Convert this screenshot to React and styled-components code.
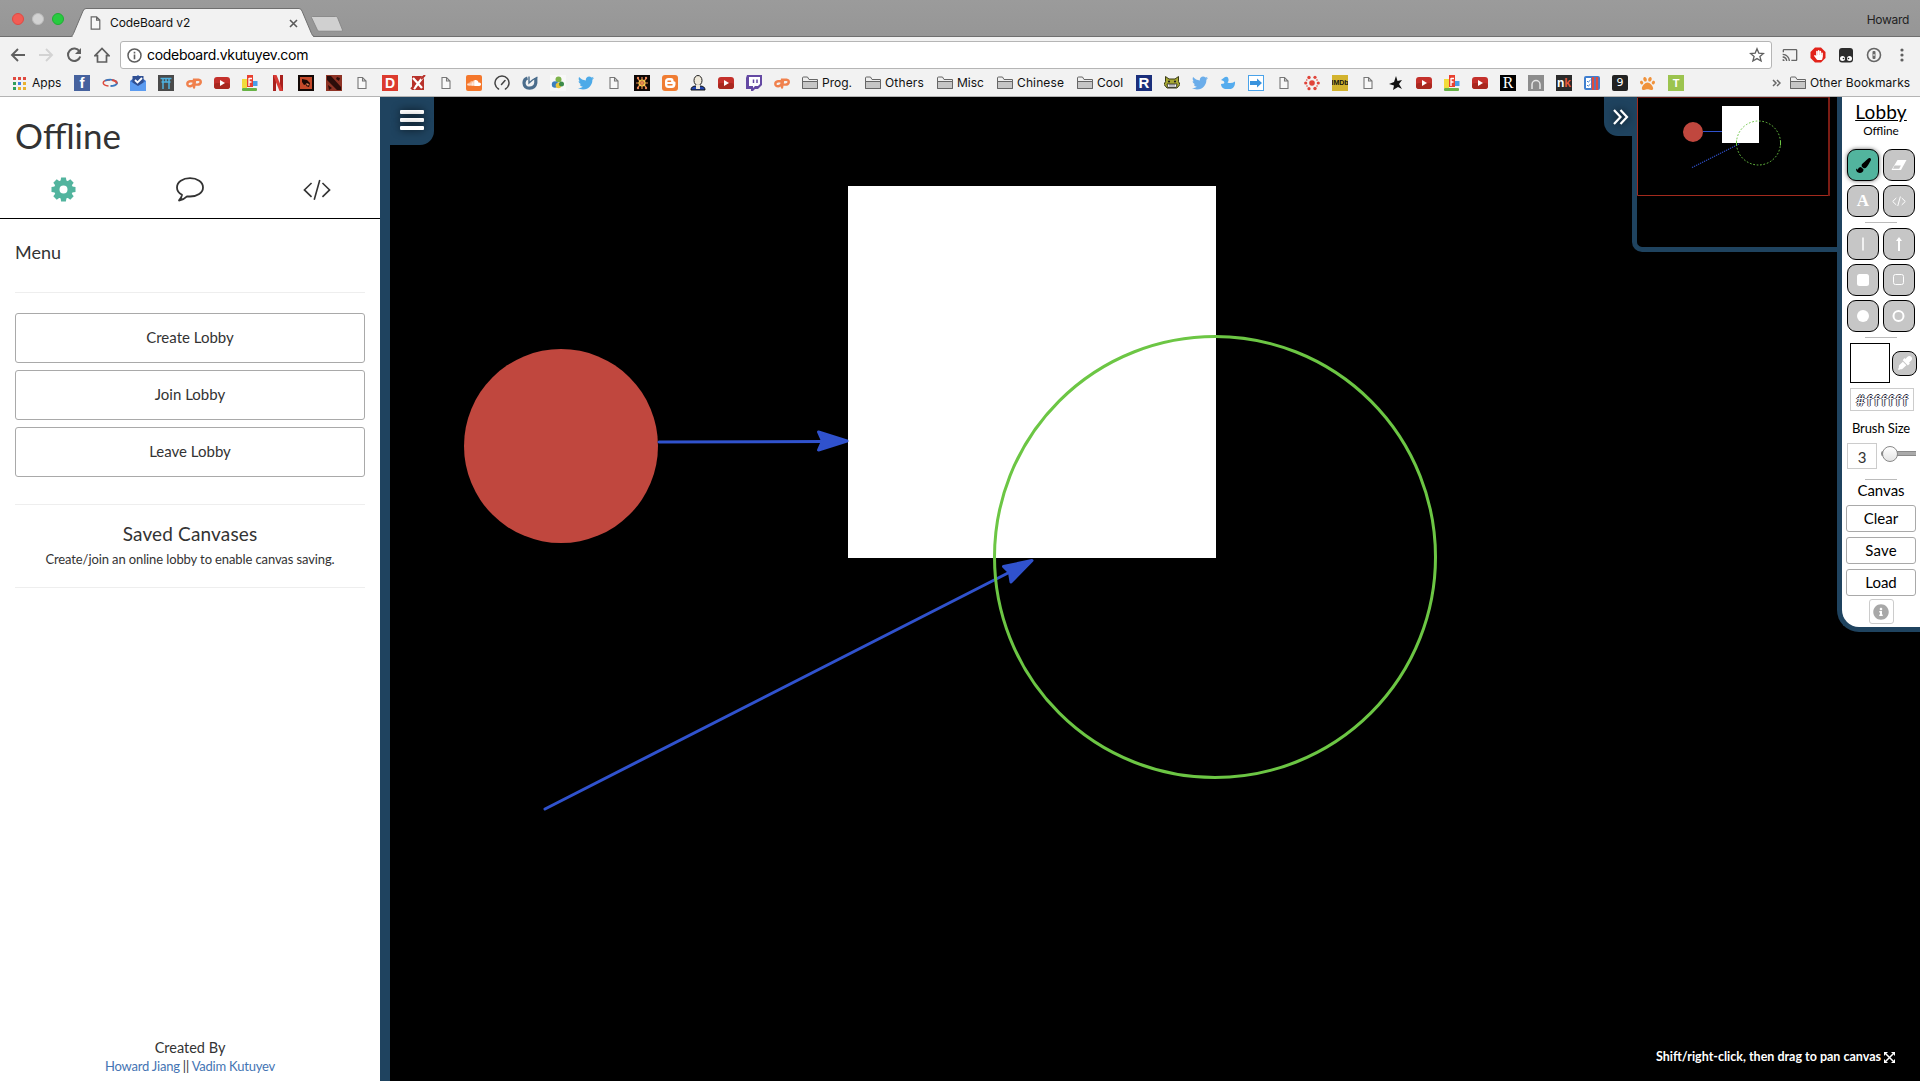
import React from "react";
import styled, { createGlobalStyle, css } from "styled-components";
import { FaTwitter, FaPaintBrush, FaEyeDropper, FaInfoCircle, FaSoundcloud, FaPaw, FaBlogger, FaHandPaper } from "react-icons/fa";
import { MdCast } from "react-icons/md";

const NAVY = "#1f435f";
const TEAL = "#52b49e";

const Global = createGlobalStyle`
  * { box-sizing: border-box; }
  body { margin: 0; background: #fff; color: #333; font-family: Lato, "Open Sans", sans-serif; overflow: hidden; }
  button { font-family: inherit; padding: 0; }
  svg { display: block; flex: none; }
`;

const Page = styled.div`
  width: 1920px;
  height: 1081px;
  display: grid;
  grid-template-rows: 97px 1fr;
`;

const Label = styled.span`
  display: inline-block;
  white-space: nowrap;
  font-size: ${(p) => p.$size}px;
  line-height: ${(p) => p.$line || 16}px;
  letter-spacing: ${(p) => (p.$track ? `${p.$track}px` : "normal")};
  font-weight: ${(p) => p.$weight || 400};
  color: ${(p) => p.$color || "inherit"};
`;

/* ---------- Browser window ---------- */

const Browser = styled.header`
  display: grid;
  grid-template-rows: 37px 36px 24px;
  background: #f2f2f2;
  border-bottom: 1px solid #b4b4b4;
  font-family: Inter, Roboto, sans-serif;
  color: #111;
`;

const TabStrip = styled.div`
  display: flex;
  background: linear-gradient(#9b9b9b, #969696);
  border-bottom: 1px solid #6f6f6f;
`;

const Lights = styled.div`
  display: flex;
  gap: 8px;
  padding: 13px 0 0 12px;
  width: 71px;
`;

const Light = styled.i`
  width: 12px;
  height: 12px;
  border-radius: 50%;
  background: ${(p) => p.$fill};
  border: 1px solid ${(p) => p.$edge};
`;

const Tab = styled.div`
  position: relative;
  width: 244px;
  height: 37px;
`;

const TabShape = styled.svg`
  position: absolute;
  left: 0;
  top: 0;
`;

const TabContent = styled.div`
  position: relative;
  display: flex;
  align-items: center;
  padding: 10px 17px 0 19px;
  height: 36px;
`;

const TabTitle = styled.div`
  flex: 1;
  display: flex;
  padding-left: 9px;
`;

const Profile = styled.div`
  margin-left: auto;
  padding: 8px 11px 0 0;
`;

const AddressRow = styled.div`
  display: flex;
  align-items: center;
  padding: 0 10px;
`;

const Nav = styled.div`
  display: flex;
  gap: 12px;
  width: 110px;
`;

const Omnibox = styled.div`
  width: 1652px;
  height: 28px;
  display: flex;
  align-items: center;
  background: #fff;
  border: 1px solid #b5b5b5;
  border-radius: 3px;
  padding: 0 6px;
`;

const Url = styled.div`
  flex: 1;
  display: flex;
  padding-left: 5px;
  color: #000;
`;

const Extensions = styled.div`
  display: flex;
  gap: 12px;
  padding-left: 10px;
`;

const BookmarkBar = styled.div`
  display: flex;
  align-items: center;
  gap: 12px;
  padding: 0 10px 4px 13px;
`;

const Bookmark = styled.div`
  display: flex;
  align-items: center;
  gap: 4px;
  flex: none;
  width: ${(p) => p.$w || 16}px;
`;

const Tile = styled.span`
  width: 16px;
  height: 16px;
  display: flex;
  align-items: center;
  justify-content: center;
  overflow: hidden;
  background: ${(p) => p.$bg};
  color: ${(p) => p.$fg || "#fff"};
  border-radius: ${(p) => p.$r || 0}px;
  font: ${(p) => p.$font || "700 13px 'Liberation Sans', sans-serif"};
  line-height: 16px;
`;

const Ember = styled.span`
  color: #e8593a;
`;

const Overflow = styled.div`
  margin-left: auto;
  display: flex;
  align-items: center;
  gap: 9px;
`;

const PageIcon = ({ w = 10, h = 13 }) => (
  <svg width={w} height={h} viewBox="0 0 10 13" fill="#f8f8f8" stroke="#666" strokeWidth="1.1">
    <path d="M1 .8h5l3 3v8.4H1zM6 .8v3h3" />
  </svg>
);

const PageMark = () => (
  <svg width="16" height="16" viewBox="0 0 16 16" fill="#f8f8f8" stroke="#777" strokeWidth="1.1">
    <path d="M4 2.5h4.500l3.500 3.500v7.500H4zM8.500 2.500V6H12" />
  </svg>
);

const Folder = () => (
  <svg width="16" height="14" viewBox="0 0 16 14" stroke="#666" strokeWidth="1">
    <path d="M.5 12.500V2Q.5 1 1.500 1h4L7 3.500h8.500v9z" fill="#eee" />
    <path d="M.5 12.500v-7h15v7z" fill="#c6c6c6" />
  </svg>
);

const Svg16 = ({ children }) => <svg width="16" height="16" viewBox="0 0 16 16">{children}</svg>;

const Youtube = () => (
  <Svg16>
    <rect x="0" y="2" width="16" height="12" rx="3" fill="#c4302b" />
    <rect x="0" y="8" width="16" height="6" rx="3" fill="#a9281f" />
    <path d="M6 5v6l5-3z" fill="#fff" />
  </Svg16>
);

const Codepath = () => (
  <Svg16>
    <g fill="none" stroke="#f0814d" strokeWidth="2.4" strokeLinecap="round">
      <path d="M6.500 6.200H4Q1.400 6.500 1.300 9q.2 2.400 3 2.300Q7 11 7.500 8.500L8 4.800h4.500q2.600.3 2.200 2.700Q14 9.600 11.500 9.600H9.500M9 5.500L8 12.500" />
    </g>
  </Svg16>
);

const Blocks = () => (
  <Svg16>
    <rect x="0" y="4" width="5" height="9" fill="#f2dc3b" />
    <rect x="5" y="0" width="6" height="12" fill="#e8402f" />
    <path d="M7 3v8M7 3.500h3M7 7h2.500" stroke="#fff" strokeWidth="1.300" fill="none" />
    <rect x="11" y="6" width="4.500" height="5" fill="#4a9ee8" />
    <rect x="0" y="13" width="15" height="3" rx="1" fill="#67b345" />
  </Svg16>
);

const Bird = ({ c }) => <FaTwitter size={16} color={c} />;

const leftMarks = [
  <Tile $bg="#46629e" $font="700 15px 'Liberation Sans', sans-serif">f</Tile>,
  <Svg16>
    <path d="M8 5Q1.500 4.700 1.200 8q.4 2.500 5.300 3" fill="none" stroke="#dd4b3e" strokeWidth="1.500" />
    <path d="M3 5.800Q7 4 11 5q4.500 1.200 4 3.500Q13.500 11 8.500 11" fill="none" stroke="#3c78bd" strokeWidth="1.800" />
    <path d="M10 5q5 1 4.600 3.700" fill="none" stroke="#dd4b3e" strokeWidth="2" />
  </Svg16>,
  <Svg16>
    <path d="M0 6l8-6 8 6v9H0z" fill="#3b6fc6" />
    <path d="M2.500 1h11v8l-5.500 3-5.500-3z" fill="#2f4f92" />
    <path d="M5 5l2.500 2.500L12 3" fill="none" stroke="#fff" strokeWidth="1.800" />
    <path d="M0 6l8 5 8-5v10H0z" fill="#5b9bf0" />
  </Svg16>,
  <Svg16>
    <rect width="16" height="16" fill="#4a4a4a" />
    <path d="M2.500 3.500h11M3.500 7h9M5 4v10M11 4v10M8 4v3" stroke="#4fb1e0" strokeWidth="1.500" fill="none" />
  </Svg16>,
  <Codepath />,
  <Youtube />,
  <Blocks />,
  <Svg16>
    <path d="M4.500 0v16M11.500 0v16" stroke="#a9201d" strokeWidth="3" />
    <path d="M3 0h3.500L13 16H9.500z" fill="#d83a34" />
  </Svg16>,
  <Svg16>
    <rect width="16" height="16" fill="#120806" />
    <rect x="2" y="2" width="12" height="12" fill="#c4492a" />
    <path d="M4 4l5 1 3 3-1 4-3-1 1-2-3 1-2-3z" fill="#1c0805" />
    <path d="M8 8l3 1-1 2z" fill="#e98f62" />
  </Svg16>,
  <Svg16>
    <rect width="16" height="16" fill="#8e3325" />
    <path d="M1 1h4l10 11v3h-4L1 5zM11 2l3 1-1 3-3-2zM2 10l4 3-3 2z" fill="#2b0d0a" />
  </Svg16>,
  <PageMark />,
  <Tile $bg="#dc3b2e" $font="700 14px 'Liberation Sans', sans-serif">D</Tile>,
  <Svg16>
    <rect x="2" y="1" width="12" height="14" fill="#b8322b" />
    <path d="M3 3l9 10M13 2L4 14" stroke="#fff" strokeWidth="2.300" />
    <path d="M11 4l4-4M1 14l3-3" stroke="#b8322b" strokeWidth="2" />
  </Svg16>,
  <PageMark />,
  <Tile $bg="#f4772c" $r={2}><FaSoundcloud size={14} /></Tile>,
  <Svg16>
    <path d="M4.500 14A7 7 0 1 1 11.500 14M7.500 9.500L11 5.500" fill="none" stroke="#444" strokeWidth="1.500" strokeLinecap="round" />
  </Svg16>,
  <Svg16>
    <path d="M5.500 3Q2 4 2 8q.3 5 5.500 5.200Q13 13 13.800 8V3" fill="none" stroke="#4b6d8c" strokeWidth="3.200" />
    <path d="M7 1.500v6.500l3.500-3 5-3" fill="none" stroke="#4b6d8c" strokeWidth="1.400" />
  </Svg16>,
  <Svg16>
    <rect width="16" height="16" fill="#f8f8f8" />
    <circle cx="8.500" cy="4.500" r="3" fill="#7db34a" />
    <circle cx="5" cy="9.500" r="3.200" fill="#3b7fc0" />
    <circle cx="8.500" cy="10.500" r="2.800" fill="#e8c53b" />
    <circle cx="11.500" cy="9" r="2.500" fill="#3d8b4a" />
  </Svg16>,
  <Bird c="#4daae8" />,
  <PageMark />,
  <Svg16>
    <rect width="16" height="16" fill="#0c0706" />
    <g fill="none" stroke="#e8894f" strokeWidth="1.200">
      <path d="M8 2v12M2 8h12M4 4l8 8M12 4l-8 8" />
      <circle cx="8" cy="8" r="3" stroke="#f7d04c" />
    </g>
    <g fill="#ee8a5c"><circle cx="4" cy="3" r="1.200" /><circle cx="12" cy="3" r="1.200" /><circle cx="4" cy="13" r="1.200" /><circle cx="12" cy="13" r="1.200" /></g>
  </Svg16>,
  <Svg16>
    <rect width="16" height="16" rx="3" fill="#f07d33" />
    <path d="M6.500 3h2.500q2.500 0 2.500 2.500 0 1 1 1t1 1v2Q13 13 10 13H6.500Q3 13 3 9.500v-3Q3 3 6.500 3z" fill="#fff" />
    <path d="M6 6.200h2.500M6 9.800h4" stroke="#f07d33" strokeWidth="1.500" strokeLinecap="round" />
  </Svg16>,
  <Svg16>
    <path d="M1 15q0-4 5-4h4q5 0 5 4z" fill="#2346b0" stroke="#111" />
    <ellipse cx="8" cy="5.500" rx="4" ry="5" fill="#efe9da" stroke="#222" />
    <path d="M6 10h4v4H6z" fill="#efe9da" />
  </Svg16>,
  <Youtube />,
  <Svg16>
    <path d="M1 0h15v10l-4 4H9l-2 2H5v-2H0V3z" fill="#6449a3" />
    <path d="M3 2h11v7l-2 2H9l-2 2v-2H3z" fill="#fff" />
    <path d="M7.500 4.500v3.500M11 4.500v3.500" stroke="#6449a3" strokeWidth="1.500" />
  </Svg16>,
  <Codepath />,
];

const folders = [["Prog.", 51, 0], ["Others", 60, 0.15], ["Misc", 48, 0], ["Chinese", 68, 0.12], ["Cool", 47, 0]];

const rightMarks = [
  <Tile $bg="#1b2f7c" $font="700 15px 'Liberation Sans', sans-serif">R</Tile>,
  <Svg16>
    <path d="M1.500 1.500L5 4h6l3.500-2.500v5l1.500 3-3 3.500H3l-3-3.500 1.500-3z" fill="#a7a833" stroke="#3a3b17" />
    <path d="M3 9h10l-1 3.500H4z" fill="#fff" stroke="#222" strokeWidth=".8" />
    <path d="M6 9v3M8 9v3M10 9v3" stroke="#222" strokeWidth=".6" />
    <circle cx="5" cy="6.500" r="1.100" fill="#222" /><circle cx="11" cy="6.500" r="1.100" fill="#222" />
  </Svg16>,
  <Bird c="#6badea" />,
  <Svg16>
    <path d="M5 2q3-1 3.500 2T7.500 7.500Q11 9 15 6.500q.5 6-4 7.500H5q-4-1-4-5l3-.5Q5 7 3.500 6L1 5z" fill="#55acee" />
  </Svg16>,
  <Svg16>
    <rect x=".5" y=".5" width="15" height="15" fill="#fff" stroke="#4aa3ea" />
    <path d="M2 6h7V3.500L14 8l-5 4.500V10H2z" fill="#3a93dd" />
  </Svg16>,
  <PageMark />,
  <Svg16>
    <g fill="#e0443a">
      <circle cx="8" cy="8" r="2.800" /><circle cx="5" cy="2.500" r="1.700" /><circle cx="11" cy="2.300" r="1.600" />
      <circle cx="14.300" cy="8" r="1.600" /><circle cx="11" cy="13.500" r="1.700" /><circle cx="5" cy="13.700" r="1.600" /><circle cx="1.700" cy="8" r="1.600" />
      <circle cx="2.800" cy="5" r=".8" /><circle cx="13" cy="5" r=".8" /><circle cx="3" cy="11" r=".8" /><circle cx="13" cy="11" r=".8" />
    </g>
  </Svg16>,
  <Tile $bg="#d3b32e" $fg="#111" $font="700 7px 'Liberation Sans', sans-serif">IMDb</Tile>,
  <PageMark />,
  <Svg16>
    <path d="M8 1l1.500 5L14 5l-3 4 3 5-4-2-5 3 1-4.500L1 9l5-2z" fill="#111" />
  </Svg16>,
  <Youtube />,
  <Blocks />,
  <Youtube />,
  <Tile $bg="#000" $font="400 16px 'Liberation Serif', serif">R</Tile>,
  <Svg16>
    <rect width="16" height="16" fill="#8d8d8d" />
    <path d="M4 14V9.500a4 4 0 0 1 8 0V14" fill="none" stroke="#e6e6e6" strokeWidth="1.500" />
  </Svg16>,
  <Tile $bg="#2b2b2b" $font="700 12px 'Liberation Sans', sans-serif">n<Ember>k</Ember></Tile>,
  <Svg16>
    <rect x="0" y="1" width="16" height="14" rx="2" fill="#3f7fd0" />
    <rect x="2" y="3" width="5" height="10" fill="#fff" />
    <path d="M3 6l1.200 1.200L6.500 5M3 10l1.200 1.200L6.500 9" stroke="#3f7fd0" fill="none" />
    <path d="M9 2v13M13 2v13" stroke="#e04b3c" strokeWidth="2.400" />
  </Svg16>,
  <Tile $bg="#222" $r={2} $font="400 11px 'DejaVu Sans', sans-serif">9</Tile>,
  <FaPaw size={15} color="#f0923b" />,
  <Tile $bg="#9cc44f" $font="700 11px 'Liberation Sans', sans-serif">T</Tile>,
];

const appsColors = ["#e04a3f", "#e04a3f", "#e04a3f", "#2f9e5b", "#3f7ee0", "#e9b12f", "#2f9e5b", "#e9b12f", "#e9b12f"];

const BrowserChrome = () => (
  <Browser>
    <TabStrip>
      <Lights>
        <Light $fill="#f25c54" $edge="#df4a43" />
        <Light $fill="#d2d2d2" $edge="#bdbdbd" />
        <Light $fill="#28cb40" $edge="#1fae33" />
      </Lights>
      <Tab>
        <TabShape width="280" height="37" viewBox="0 0 280 37">
          <path d="M0 36.500Q1.500 36 2.500 33.500L12 11q1-2.500 3-2.500H228q2 0 3 2.500l9.500 22.500q1 2.500 2.500 3v.500H0z" fill="#f2f2f2" stroke="#6f6f6f" />
          <path d="M2 36h240v1H2z" fill="#f2f2f2" />
          <path d="M240.500 17.500q0-1 1-1h23q1.500 0 2 1l5 12.500q0 1.200-1 1.200h-22q-1.500 0-2-1z" fill="#d0d0d0" stroke="#808080" strokeWidth=".8" />
        </TabShape>
        <TabContent>
          <PageIcon w={11} h={14} />
          <TabTitle><Label $size={12} $track={-0.1}>CodeBoard v2</Label></TabTitle>
          <svg width="9" height="9" viewBox="0 0 9 9" stroke="#5a5a5a" strokeWidth="1.600"><path d="M1 1l7 7M8 1L1 8" /></svg>
        </TabContent>
      </Tab>
      <Profile><Label $size={12} $track={-0.3} $color="#222">Howard</Label></Profile>
    </TabStrip>
    <AddressRow>
      <Nav>
        <Svg16><path d="M15 8H2.500M8 2L2 8l6 6" fill="none" stroke="#5f5f5f" strokeWidth="1.900" /></Svg16>
        <Svg16><path d="M1 8h12.500M8 2l6 6-6 6" fill="none" stroke="#d3d3d3" strokeWidth="1.900" /></Svg16>
        <Svg16><path d="M13.500 4.500A6.200 6.200 0 1 0 14.200 9.500" fill="none" stroke="#5f5f5f" strokeWidth="2" /><path d="M15 1v6H9z" fill="#5f5f5f" /></Svg16>
        <Svg16><path d="M1 8.700L8 1.500l7 7.200h-2.500V15h-9V8.700z" fill="none" stroke="#5f5f5f" strokeWidth="1.700" /></Svg16>
      </Nav>
      <Omnibox>
        <svg width="15" height="15" viewBox="0 0 15 15">
          <circle cx="7.500" cy="7.500" r="6.500" fill="none" stroke="#5f5f5f" strokeWidth="1.500" />
          <path d="M7.500 6.500v4.800M7.500 3.700v1.700" stroke="#5f5f5f" strokeWidth="1.600" />
        </svg>
        <Url><Label $size={14} $track={-0.31}>codeboard.vkutuyev.com</Label></Url>
        <Svg16><path d="M8 1.800l1.800 4.300 4.700.4-3.600 3 1.200 4.500L8 11.600 3.900 14l1.200-4.500-3.600-3 4.700-.4z" fill="none" stroke="#5f5f5f" strokeWidth="1.300" /></Svg16>
      </Omnibox>
      <Extensions>
        <MdCast size={16} color="#666" />
        <Svg16>
          <path d="M5 .5h6L15.500 5v6L11 15.500H5L.5 11V5z" fill="#e2231a" />
          <g transform="translate(3.500 3)" color="#fff"><FaHandPaper size={10} /></g>
        </Svg16>
        <Svg16>
          <rect x="1" y="1" width="14" height="14.500" rx="3" fill="#2d2d2d" />
          <circle cx="4.500" cy="11.500" r="2.500" fill="#fff" /><circle cx="11.500" cy="11.500" r="2.500" fill="#fff" />
          <circle cx="5.500" cy="11.500" r=".8" fill="#222" /><circle cx="10.500" cy="11.500" r=".8" fill="#222" />
        </Svg16>
        <Svg16>
          <circle cx="8" cy="8" r="6.500" fill="none" stroke="#666" strokeWidth="1.600" />
          <rect x="6.500" y="4" width="3" height="8" rx="1" fill="#666" />
          <rect x="7.500" y="7" width="1" height="2" fill="#fff" />
        </Svg16>
        <Svg16><circle cx="8" cy="3" r="1.600" fill="#5f5f5f" /><circle cx="8" cy="8" r="1.600" fill="#5f5f5f" /><circle cx="8" cy="13" r="1.600" fill="#5f5f5f" /></Svg16>
      </Extensions>
    </AddressRow>
    <BookmarkBar>
      <Bookmark $w={49}>
        <svg width="15" height="13" viewBox="0 0 15 13">
          {appsColors.map((c, i) => <rect key={i} x={(i % 3) * 5} y={Math.floor(i / 3) * 5} width="3" height="3" fill={c} />)}
        </svg>
        <Label $size={12}>Apps</Label>
      </Bookmark>
      {leftMarks.map((m, i) => <Bookmark key={i}>{m}</Bookmark>)}
      {folders.map(([name, w, track]) => (
        <Bookmark key={name} $w={w}><Folder /><Label $size={12} $track={track}>{name}</Label></Bookmark>
      ))}
      {rightMarks.map((m, i) => <Bookmark key={i}>{m}</Bookmark>)}
      <Overflow>
        <svg width="9" height="8" viewBox="0 0 9 8" fill="none" stroke="#666" strokeWidth="1.500"><path d="M1 1l3 3-3 3M5 1l3 3-3 3" /></svg>
        <Bookmark $w={120}><Folder /><Label $size={12} $track={0.1}>Other Bookmarks</Label></Bookmark>
      </Overflow>
    </BookmarkBar>
  </Browser>
);

/* ---------- Side panel ---------- */

const Body = styled.main`
  display: flex;
  min-height: 0;
`;

const Sidebar = styled.aside`
  width: 390px;
  flex: none;
  display: flex;
  flex-direction: column;
  background: #fff;
  border-right: 10px solid ${NAVY};
`;

const Title = styled.h1`
  display: flex;
  margin: 0;
  padding: 18px 15px 0;
  font-weight: 400;
`;

const Tabs = styled.nav`
  height: 64px;
  display: grid;
  grid-template-columns: repeat(3, 1fr);
  place-items: center;
  padding-top: 6px;
  border-bottom: 1px solid #000;
`;

const Content = styled.section`
  flex: 1;
  display: flex;
  flex-direction: column;
  padding: 23px 15px 0;
`;

const Rule = styled.hr`
  width: 100%;
  border: 0;
  height: 1px;
  background: #eee;
  margin: ${(p) => p.$m};
`;

const Stack = styled.div`
  display: flex;
  flex-direction: column;
  gap: ${(p) => p.$gap}px;
`;

const Button = styled.button`
  display: flex;
  align-items: center;
  justify-content: center;
  width: ${(p) => p.$w || "100%"};
  height: ${(p) => p.$h}px;
  padding-bottom: ${(p) => p.$lift ?? 1}px;
  color: ${(p) => p.$color || "#333"};
  background: #fff;
  border: 1px solid ${(p) => p.$edge || "#a9a9a9"};
  border-radius: 3px;
`;

const Centered = styled.div`
  display: flex;
  flex-direction: column;
  align-items: center;
  gap: ${(p) => p.$gap || 0}px;
`;

const Footer = styled.footer`
  display: flex;
  flex-direction: column;
  align-items: center;
  padding-bottom: 6px;
`;

const Link = styled.a`
  color: #4474b3;
`;

const CodeGlyph = ({ size, color, weight = 1.6 }) => (
  <svg width={size} height={size * 0.78} viewBox="0 0 28 22" fill="none" stroke={color} strokeWidth={weight}>
    <path d="M8.500 4L1.300 11l7.200 7M19.500 4l7.200 7-7.200 7M16.800 1L11.200 21" />
  </svg>
);

const Gear = () => (
  <svg width="25" height="25" viewBox="-12.500 -12.500 25 25" fill={TEAL}>
    {[0, 45, 90, 135, 180, 225, 270, 315].map((a) => (
      <path key={a} d="M-3.200 -7L-2.400 -12H2.400L3.200 -7z" transform={`rotate(${a})`} />
    ))}
    <circle r="6.700" fill="none" stroke={TEAL} strokeWidth="5.400" />
  </svg>
);

const Bubble = () => (
  <svg width="28" height="25" viewBox="0 0 28 25" fill="none" stroke="#333" strokeWidth="1.800" strokeLinejoin="round">
    <path d="M14 1.200c7.200 0 13 4 13 9.200s-5.800 9.100-13 9.100c-1 0-2 0-3-.2-2.200 2.200-4.800 3.800-8 4.200 1.700-1.700 2.700-3.500 3-5.700C3 16.200 1 13.500 1 10.400 1 5.200 6.800 1.200 14 1.200z" />
  </svg>
);

const SidePanel = () => (
  <Sidebar>
    <Title><Label $size={35} $line={40}>Offline</Label></Title>
    <Tabs><Gear /><Bubble /><CodeGlyph size={28} color="#333" /></Tabs>
    <Content>
      <Label $size={18} $line={20}>Menu</Label>
      <Rule $m="30px 0 20px" />
      <Stack $gap={7}>
        <Button $h={50} $lift={2}><Label $size={15}>Create Lobby</Label></Button>
        <Button $h={50} $lift={2}><Label $size={15}>Join Lobby</Label></Button>
        <Button $h={50} $lift={2}><Label $size={15}>Leave Lobby</Label></Button>
      </Stack>
      <Rule $m="27px 0 19px" />
      <Centered $gap={6}>
        <Label $size={19} $line={20} $track={0.15}>Saved Canvases</Label>
        <Label $size={13} $line={18} $track={-0.11}>Create/join an online lobby to enable canvas saving.</Label>
      </Centered>
      <Rule $m="19px 0 0" />
    </Content>
    <Footer>
      <Label $size={14.5} $line={18}>Created By</Label>
      <Label $size={13} $line={18} $track={-0.21}><Link>Howard Jiang</Link> || <Link>Vadim Kutuyev</Link></Label>
    </Footer>
  </Sidebar>
);

/* ---------- Drawing area ---------- */

const Board = styled.section`
  position: relative;
  flex: 1;
  background: #000;
  overflow: hidden;
`;

const MenuToggle = styled.button`
  position: absolute;
  left: 0;
  top: 0;
  width: 44px;
  height: 48px;
  display: flex;
  flex-direction: column;
  gap: 4px;
  padding: 13px 0 0 10px;
  border: 0;
  background: ${NAVY};
  border-radius: 0 0 14px 0;
`;

const Bar = styled.i`
  width: 24px;
  height: 4px;
  background: #fff;
  border-radius: 1px;
  box-shadow: 0 0 9px rgba(0, 0, 0, 0.75);
`;

const Dock = styled.div`
  position: absolute;
  right: 0;
  top: 0;
  display: flex;
  align-items: flex-start;
`;

const MapToggle = styled.button`
  width: 28px;
  height: 39px;
  display: grid;
  place-items: center;
  padding-left: 6px;
  border: 0;
  background: ${NAVY};
  border-radius: 0 0 0 14px;
  svg { filter: drop-shadow(0 0 4px rgba(0, 0, 0, 0.8)); overflow: visible; }
`;

const MiniMap = styled.div`
  width: 205px;
  height: 155px;
  background: #000;
  border: solid ${NAVY};
  border-width: 0 0 5px 5px;
  border-radius: 0 0 0 10px;
`;

const Tools = styled.aside`
  width: 83px;
  display: flex;
  flex-direction: column;
  align-items: center;
  padding: 5px 0 3px;
  background: #fff;
  color: #000;
  border: solid ${NAVY};
  border-width: 0 0 5px 5px;
  border-radius: 0 0 0 22px;
`;

const RoomName = styled(Label)`
  text-decoration: underline;
`;

const SerifLetter = styled(Label)`
  font-family: "Liberation Serif", serif;
`;

const ToolGrid = styled.div`
  display: grid;
  grid-template-columns: 32px 32px;
  gap: 4px;
  margin-top: ${(p) => p.$mt}px;
`;

const ToolButton = styled.button`
  width: ${(p) => p.$s || 32}px;
  height: ${(p) => p.$s || 32}px;
  display: grid;
  place-items: center;
  border: 1px solid #000;
  border-radius: ${(p) => (p.$s ? 8 : 9)}px;
  background: #c6c6c6;
  color: #fff;
  ${(p) => p.$active && css`
    background: ${TEAL};
    color: #000;
    box-shadow: 0 0 4px rgba(0, 0, 0, 0.6);
  `}
`;

const Divider = styled.i`
  width: 32px;
  height: 1px;
  background: #bbb;
  margin-top: ${(p) => p.$mt}px;
`;

const Row = styled.div`
  display: flex;
  align-items: center;
  gap: ${(p) => p.$gap}px;
  margin: ${(p) => p.$m};
`;

const Swatch = styled.div`
  width: 40px;
  height: 40px;
  background: #fff;
  border: 1px solid #000;
`;

const Field = styled.div`
  width: ${(p) => p.$w}px;
  height: ${(p) => p.$h}px;
  display: flex;
  align-items: center;
  justify-content: center;
  border: 1px solid #ccc;
  padding-top: ${(p) => p.$drop || 0}px;
  margin: ${(p) => p.$m || 0};
  color: #333;
`;

const HexText = styled.span`
  font-family: Lato, sans-serif;
  font-size: 15px;
  line-height: 16px;
  letter-spacing: 1.9px;
  padding-left: 2px;
  color: #fff;
  text-shadow: 0 -1px 0 #223, 1px 0 0 #445, -1px 0 0 #556, 0 1px 0 #99a;
`;

const Slider = styled.div`
  width: 35px;
  height: 26px;
  display: flex;
  align-items: center;
  padding-bottom: 5px;
`;

const Track = styled.div`
  width: 35px;
  height: 5px;
  display: flex;
  align-items: center;
  border: 1px solid #8a8a8a;
  border-right: 0;
  border-radius: 3px 0 0 3px;
  background: #aaa;
`;

const Thumb = styled.i`
  width: 16px;
  height: 16px;
  flex: none;
  border-radius: 50%;
  border: 1px solid #888;
  background: linear-gradient(#fff, #e4e4e4);
`;

const Hint = styled.div`
  position: absolute;
  right: 25px;
  bottom: 16px;
  display: flex;
  align-items: center;
  gap: 3px;
  color: #fff;
`;

const Drawing = () => (
  <svg width="1530" height="984" viewBox="390 97 1530 984">
    <rect x="848" y="186" width="368" height="372" fill="#fff" />
    <circle cx="561" cy="446" r="97" fill="#c0473e" />
    <g stroke="#3052cd" strokeWidth="3" strokeLinecap="round" strokeLinejoin="round" fill="#3052cd">
      <path d="M659 442L825 441.500" />
      <path d="M847 441l-28.500 -9l4 9l-4 9z" />
      <path d="M545 809L1008 573" />
      <path d="M1032 560.500L1003.500 566.500L1009.500 572.500L1011 582z" />
    </g>
    <circle cx="1215" cy="557" r="220.500" fill="none" stroke="#6cc644" strokeWidth="3" />
  </svg>
);

const MapDrawing = () => (
  <svg width="200" height="150" viewBox="1637 97 200 150">
    <path d="M1637.500 97V195.500H1829" fill="none" stroke="#a32a1d" />
    <path d="M1637 97.500H1829" stroke="#5c130d" />
    <path d="M1829 97V196" stroke="#7b1c14" strokeWidth="2" />
    <circle cx="1693" cy="132" r="10" fill="#c0473e" />
    <rect x="1722" y="106" width="37" height="37" fill="#fff" />
    <path d="M1703 131.500H1722" stroke="#3052cd" />
    <path d="M1692 167.500L1740 143.500" stroke="#3052cd" strokeWidth="1.100" strokeDasharray="1.300 .93" />
    <circle cx="1758.500" cy="143" r="22" fill="none" stroke="#6cc644" strokeDasharray="1.700 1.750" />
    <path d="M1736.500 140.500v5M1780.500 140.500v5" stroke="#6cc644" />
  </svg>
);

const Icon = ({ children }) => (
  <svg width="16" height="16" viewBox="0 0 16 16" fill="none" stroke="#fff">{children}</svg>
);

const ToolPanel = () => (
  <Tools>
    <RoomName $size={19} $line={20} $track={0.2}>Lobby</RoomName>
    <Label $size={11.8} $line={18}>Offline</Label>
    <ToolGrid $mt={9}>
      <ToolButton $active><FaPaintBrush size={15} /></ToolButton>
      <ToolButton><Icon><path d="M6.500 3h9L10 13H.500z" fill="#fff" stroke="none" /><path d="M3.600 8.500h6.300l-1.700 3.300H1.900z" fill="#c6c6c6" stroke="none" /></Icon></ToolButton>
      <ToolButton><SerifLetter $size={17} $line={16} $weight={700}>A</SerifLetter></ToolButton>
      <ToolButton><CodeGlyph size={14} color="#fff" weight={2} /></ToolButton>
    </ToolGrid>
    <Divider $mt={5} />
    <ToolGrid $mt={5}>
      <ToolButton><Icon><path d="M8 1.500v13" strokeWidth="1.500" /></Icon></ToolButton>
      <ToolButton><Icon><path d="M8 15V4" strokeWidth="2" /><path d="M8 1L5 5h6z" fill="#fff" stroke="none" /></Icon></ToolButton>
      <ToolButton><Icon><rect x="2" y="2" width="12" height="12" rx="2.500" fill="#fff" stroke="none" /></Icon></ToolButton>
      <ToolButton><Icon><rect x="2.500" y="2.500" width="10" height="10" rx="2" /></Icon></ToolButton>
      <ToolButton><Icon><circle cx="8" cy="8" r="6" fill="#fff" stroke="none" /></Icon></ToolButton>
      <ToolButton><Icon><circle cx="7.500" cy="8" r="5" strokeWidth="2" /></Icon></ToolButton>
    </ToolGrid>
    <Divider $mt={5} />
    <Row $gap={2} $m="5px 0 0 5px">
      <Swatch />
      <ToolButton $s={25}><FaEyeDropper size={14} /></ToolButton>
    </Row>
    <Field $w={64} $h={23} $m="5px 0 0 2px"><HexText>#ffffff</HexText></Field>
    <Row $m="9px 0 0"><Label $size={13} $track={-0.1}>Brush Size</Label></Row>
    <Row $gap={4} $m="7px 0 0 1px">
      <Field $w={30} $h={26} $drop={2}><Label $size={15}>3</Label></Field>
      <Slider><Track><Thumb /></Track></Slider>
    </Row>
    <Divider $mt={10} />
    <Row $m="2px 0 7px"><Label $size={15}>Canvas</Label></Row>
    <Stack $gap={5}>
      <Button $w="70px" $h={27} $color="#000"><Label $size={15}>Clear</Label></Button>
      <Button $w="70px" $h={27} $color="#000"><Label $size={15} $track={0.2}>Save</Label></Button>
      <Button $w="70px" $h={27} $color="#000"><Label $size={15}>Load</Label></Button>
    </Stack>
    <Row $m="3px 0 0">
      <Button $w="25px" $h={25} $lift={0} $color="#a8a8a8" $edge="#ccc"><FaInfoCircle size={16} /></Button>
    </Row>
  </Tools>
);

export default function App() {
  return (
    <>
      <Global />
      <Page>
        <BrowserChrome />
        <Body>
          <SidePanel />
          <Board>
            <Drawing />
            <MenuToggle><Bar /><Bar /><Bar /></MenuToggle>
            <Dock>
              <MapToggle>
                <svg width="16" height="16" viewBox="0 0 16 16" fill="none" stroke="#fff" strokeWidth="2.200"><path d="M1 1l6.500 7L1 15M7.500 1L14 8l-6.500 7" /></svg>
              </MapToggle>
              <MiniMap><MapDrawing /></MiniMap>
              <ToolPanel />
            </Dock>
            <Hint>
              <Label $size={12.5} $weight={700}>Shift/right-click, then drag to pan canvas</Label>
              <svg width="11" height="11" viewBox="0 0 11 11" stroke="#fff" strokeWidth="1.500" fill="#fff"><path d="M2 2l7 7M9 2L2 9" /><path d="M0 0h4L0 4zM11 0v4L7 0zM0 11V7l4 4zM11 11H7l4-4z" stroke="none" /></svg>
            </Hint>
          </Board>
        </Body>
      </Page>
    </>
  );
}
